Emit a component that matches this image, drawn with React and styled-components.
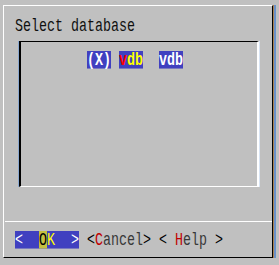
import React from 'react';
import styled, { createGlobalStyle } from 'styled-components';

const Global = createGlobalStyle`
  html, body { margin: 0; padding: 0; background: #c0c0c0; }
  body {
    width: 279px; height: 265px; overflow: hidden;
    font-family: "Liberation Mono", "DejaVu Sans Mono", monospace;
  }
`;

const Screen = styled.div`
  width: 279px;
  height: 265px;
  box-sizing: border-box;
  padding: 5px 0 0 3px;
`;

const Dialog = styled.div`
  width: 270px;
  height: 253px;
  box-sizing: border-box;
  border-top: 1px solid #ffffff;
  border-left: 1px solid #ffffff;
  border-right: 1px solid #000000;
  border-bottom: 1px solid #000000;
  box-shadow: 1px 0 0 #a88050, 3px 0 0 #6a90c8;
  display: flex;
  flex-direction: column;
`;

const LineBox = styled.div`
  height: 18px;
  margin-top: ${p => p.$mt || 0}px;
  margin-left: ${p => p.$ml || 0}px;
`;

const Line = styled.div`
  display: flex;
  height: 13.333px;
  line-height: 13.333px;
  font-size: 13.333px;
  white-space: pre;
  transform: scaleY(1.35);
  transform-origin: 0 0;
  color: ${p => p.$color || '#000'};
`;

const Seg = styled.span`
  color: ${p => p.$c || 'inherit'};
  background: ${p => p.$bg || 'transparent'};
`;

const Chip = styled.span`
  display: inline-flex;
  background: #4040c0;
  color: #ffffff;
  font-weight: ${p => (p.$bold ? 700 : 400)};
`;

const ListBox = styled.div`
  width: 240px;
  height: 146px;
  box-sizing: border-box;
  margin: 6px 0 0 15px;
  border-top: 1px solid #000;
  border-left: 2px solid #000;
  border-right: 2px solid #fff;
  border-bottom: 1px solid #fff;
  box-shadow: -1px 0 0 #8aa8d0, 1px 0 0 #d8e4f4;
  padding: 9px 0 0 66px;
`;

const Separator = styled.div`
  height: 1px;
  background: #ffffff;
  margin: 34px 0 0 1px;
`;

export default function App() {
  return (
    <>
      <Global />
      <Screen>
        <Dialog>
          <LineBox $mt={11} $ml={11}>
            <Line $color="#101010">Select database</Line>
          </LineBox>
          <ListBox>
            <LineBox>
              <Line>
                <Chip $bold>(X)</Chip>
                <Seg> </Seg>
                <Chip $bold>
                  <Seg $c="#ff0000">v</Seg>
                  <Seg $c="#ffff00">db</Seg>
                </Chip>
                <Seg>  </Seg>
                <Chip $bold>vdb</Chip>
              </Line>
            </LineBox>
          </ListBox>
          <Separator />
          <LineBox $mt={9} $ml={11}>
            <Line $color="#383838">
              <Chip>
                <Seg>{'<  '}</Seg>
                <Seg $c="#000" $bg="#c4c040">O</Seg>
                <Seg $c="#ffff00">K</Seg>
                <Seg>{'  >'}</Seg>
              </Chip>
              <Seg> </Seg>
              <Seg $c="#000">{'<'}</Seg>
              <Seg $c="#c00000">C</Seg>
              <Seg>ancel</Seg>
              <Seg $c="#000">{'>'}</Seg>
              <Seg> </Seg>
              <Seg $c="#000">{'< '}</Seg>
              <Seg $c="#c00000">H</Seg>
              <Seg>elp</Seg>
              <Seg $c="#000">{' >'}</Seg>
            </Line>
          </LineBox>
        </Dialog>
      </Screen>
    </>
  );
}
